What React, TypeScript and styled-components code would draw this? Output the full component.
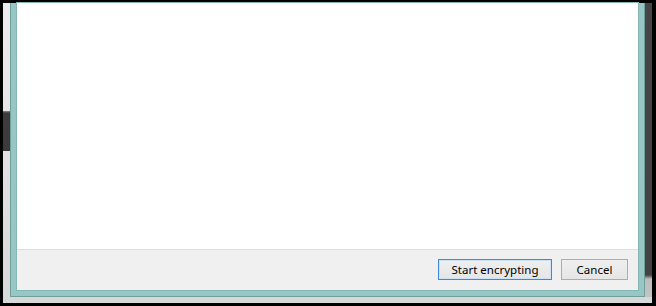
import * as React from 'react'
import styled, { createGlobalStyle } from 'styled-components'

const GlobalStyle = createGlobalStyle`
  html, body {
    margin: 0;
    padding: 0;
    background: #000;
  }

  body {
    font-family: 'Noto Sans', 'Open Sans', sans-serif;
  }
`

const Frame = styled.div`
  width: 656px;
  height: 306px;
  box-sizing: border-box;
  padding: 3px 4px 3px 3px;
  background: #000;
`

const Desktop = styled.div`
  display: flex;
  height: 300px;
  padding-bottom: 6px;
  box-sizing: border-box;
  background: #d8d8d8;
`

const Strip = styled.div<{ $side: 'left' | 'right' }>`
  width: 7px;
  flex: none;
  background: ${(p) =>
    p.$side === 'left'
      ? 'linear-gradient(to bottom, #ececec 0, #e6e6e6 108px, #8a8a8a 108px, #3c3c3c 110px, #3a3a3a 148px, #e2e2e2 148px, #d8d8d8 100%)'
      : 'linear-gradient(to bottom, #454545 0, #424242 272px, #bdbdbd 276px, #c4c4c4 100%)'};
`

const Window = styled.div`
  flex: 1;
  display: flex;
  flex-direction: column;
  box-sizing: border-box;
  padding: 0 6px 6px 6px;
  background: #96c7c4;
  border: 1px solid #6f9f9c;
  border-top: none;
`

const Client = styled.div`
  flex: 1;
  display: flex;
  flex-direction: column;
  background: #fff;
  box-shadow: 0 0 0 1px #86b6b3;
`

const Body = styled.div`
  flex: 1;
  background: #fff;
`

const Footer = styled.div`
  height: 41px;
  box-sizing: border-box;
  border-top: 1px solid #dfdfdf;
  background: #f0f0f0;
  display: flex;
  justify-content: flex-end;
  align-items: flex-start;
  gap: 9px;
  padding: 9px 10px 0 0;
`

const Button = styled.button<{ $primary?: boolean; $width: number }>`
  width: ${(p) => p.$width}px;
  height: 21px;
  box-sizing: border-box;
  padding: 0;
  margin: 0;
  font-family: 'Noto Sans', 'Open Sans', sans-serif;
  font-size: 11.5px;
  line-height: 18px;
  color: #000;
  background: linear-gradient(to bottom, #efefef, #e5e5e5);
  border: 1px solid ${(p) => (p.$primary ? '#3e8ad6' : '#acacac')};
  box-shadow: ${(p) => (p.$primary ? 'inset 0 0 0 1px #c9e2f7' : 'none')};
  cursor: default;
`

export default function App() {
  return (
    <>
      <GlobalStyle />
      <Frame>
        <Desktop>
          <Strip $side="left" />
          <Window>
            <Client>
              <Body />
              <Footer>
                <Button $primary $width={114}>
                  Start encrypting
                </Button>
                <Button $width={67}>Cancel</Button>
              </Footer>
            </Client>
          </Window>
          <Strip $side="right" />
        </Desktop>
      </Frame>
    </>
  )
}
